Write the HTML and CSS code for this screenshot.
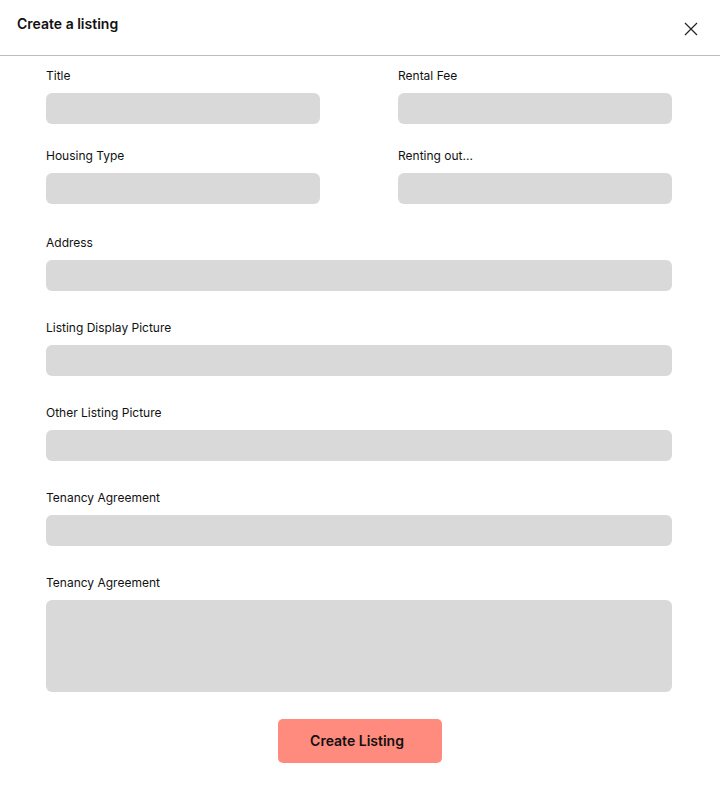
FILE: index.html
```html
<!DOCTYPE html>
<html>
<head>
<meta charset="utf-8">
<link rel="stylesheet" href="styles.css">
</head>
<body>
<div class="modal">
  <header class="header">
    <h1 class="title">Create a listing</h1>
    <button class="close" aria-label="Close">
      <svg width="14" height="14" viewBox="0 0 14 14"><path d="M1 1L13 13M13 1L1 13" stroke="#222" stroke-width="1.2" fill="none"/></svg>
    </button>
  </header>
  <form class="form">
    <div class="grid">
      <div class="field">
        <label class="label">Title</label>
        <div class="input"></div>
      </div>
      <div class="field">
        <label class="label">Rental Fee</label>
        <div class="input"></div>
      </div>
      <div class="field">
        <label class="label">Housing Type</label>
        <div class="input"></div>
      </div>
      <div class="field">
        <label class="label">Renting out...</label>
        <div class="input"></div>
      </div>
    </div>
    <div class="field wide first">
      <label class="label">Address</label>
      <div class="input"></div>
    </div>
    <div class="field wide">
      <label class="label">Listing Display Picture</label>
      <div class="input"></div>
    </div>
    <div class="field wide">
      <label class="label">Other Listing Picture</label>
      <div class="input"></div>
    </div>
    <div class="field wide">
      <label class="label">Tenancy Agreement</label>
      <div class="input"></div>
    </div>
    <div class="field wide">
      <label class="label">Tenancy Agreement</label>
      <div class="input textarea"></div>
    </div>
    <div class="actions">
      <button type="button" class="submit">Create Listing</button>
    </div>
  </form>
</div>
</body>
</html>
```
FILE: styles.css
```css
* { box-sizing: border-box; }
html, body {
  margin: 0;
  padding: 0;
  background: #fff;
  font-family: Inter, "Noto Sans", sans-serif;
  color: #111;
}
.modal {
  width: 720px;
  min-height: 809px;
}
.header {
  height: 56px;
  border-bottom: 1px solid #bdbdbd;
  display: flex;
  justify-content: space-between;
  align-items: flex-start;
  padding: 15px 22px 0 17px;
}
.title {
  margin: 0;
  font-size: 14px;
  font-weight: 600;
  line-height: 17px;
}
.close {
  background: none;
  border: 0;
  padding: 0;
  margin-top: 7px;
  width: 14px;
  height: 14px;
  display: block;
}
.close svg { display: block; }
.form {
  padding: 12px 48px 0 46px;
}
.grid {
  display: grid;
  grid-template-columns: 274px 274px;
  column-gap: 78px;
  row-gap: 24px;
}
.field {
  display: flex;
  flex-direction: column;
}
.label {
  font-size: 12px;
  line-height: 15px;
  margin-bottom: 10px;
  color: #111;
}
.input {
  height: 31px;
  background: #d9d9d9;
  border-radius: 6px;
}
.textarea {
  height: 92px;
}
.wide.first { margin-top: 31px; }
.wide { margin-top: 29px; }
.actions {
  display: flex;
  justify-content: center;
  margin-top: 27px;
  padding-left: 2px;
}
.submit {
  width: 164px;
  height: 44px;
  border: 0;
  border-radius: 5px;
  background: #ff8a7e;
  font-family: Inter, "Noto Sans", sans-serif;
  font-size: 14px;
  font-weight: 600;
  color: #111;
  padding: 0 6px 2px 0;
}
```
